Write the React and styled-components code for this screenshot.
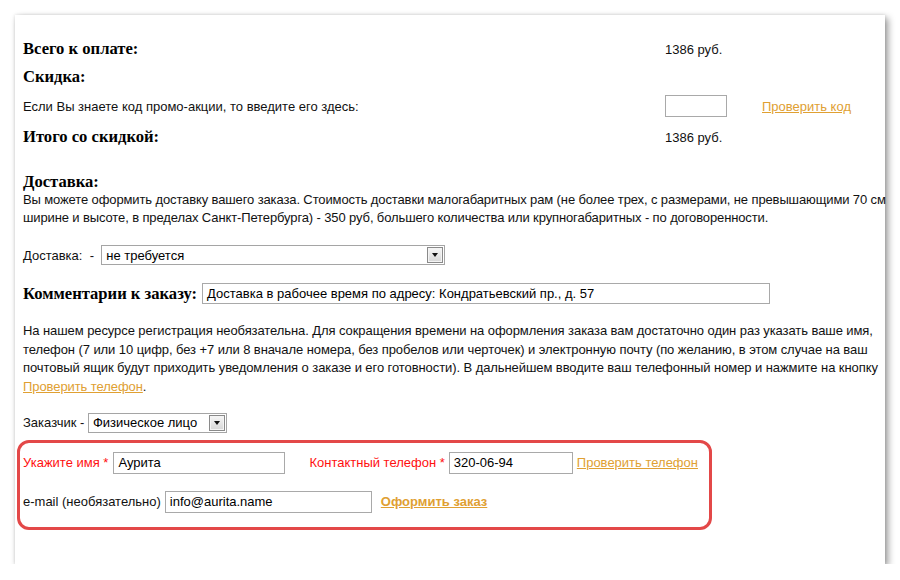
import React from 'react';
import styled, { createGlobalStyle } from 'styled-components';

const GlobalStyle = createGlobalStyle`
  html, body {
    margin: 0;
    padding: 0;
    background: #fff;
  }
  body {
    font-family: 'Liberation Sans', Arial, sans-serif;
    font-size: 13px;
    color: #111;
  }
`;

const Card = styled.div`
  margin: 15px 0 0 15px;
  width: 870px;
  box-sizing: border-box;
  padding: 24px 0 34px 8px;
  background: #fff;
  box-shadow: 3px 3px 7px rgba(0, 0, 0, 0.4), 0 0 3px rgba(0, 0, 0, 0.12);
  display: flex;
  flex-direction: column;
`;

const Row = styled.div`
  display: flex;
  align-items: center;
  height: ${(p) => p.h || 20}px;
  margin-top: ${(p) => p.mt || 0}px;
  white-space: pre;
`;

const SumRow = styled.div`
  display: grid;
  grid-template-columns: 642px 62px 35px auto;
  align-items: center;
  height: ${(p) => p.h || 20}px;
  margin-top: ${(p) => p.mt || 0}px;
`;

const Heading = styled.div`
  font-family: 'Liberation Serif', 'Times New Roman', serif;
  font-weight: bold;
  font-size: 16.6px;
  color: #000;
  height: ${(p) => p.h || 20}px;
  line-height: ${(p) => p.h || 20}px;
  margin-top: ${(p) => p.mt || 0}px;
  margin-right: ${(p) => p.mr || 0}px;
`;

const Para = styled.p`
  margin: ${(p) => p.mt || 0}px -20px 0 0;
  line-height: ${(p) => p.lh || 18}px;
  letter-spacing: ${(p) => p.ls || -0.08}px;
  white-space: nowrap;
`;

const Link = styled.a`
  color: #e0a032;
  text-decoration: underline;
  font-weight: ${(p) => (p.bold ? 'bold' : 'normal')};
  margin-left: ${(p) => p.ml || 0}px;
  cursor: pointer;
`;

const TextInput = styled.div`
  box-sizing: border-box;
  width: ${(p) => p.w}px;
  height: ${(p) => p.h || 21}px;
  border: 1px solid #a9a9a9;
  padding: 0 4px;
  display: flex;
  align-items: center;
  color: #000;
  white-space: pre;
`;

const Select = styled.div`
  box-sizing: border-box;
  width: ${(p) => p.w}px;
  height: 20px;
  border: 1px solid #a5a5a5;
  display: flex;
  align-items: center;
  justify-content: space-between;
  padding: 0 1px 0 4px;
  color: #000;
`;

const ArrowBox = styled.div`
  width: 16px;
  height: 16px;
  box-sizing: border-box;
  border: 1px solid #8a8a8a;
  box-shadow: inset 0 0 0 1px #f4f4f4;
  background: linear-gradient(#f6f6f6, #d6d6d6);
  display: flex;
  align-items: center;
  justify-content: center;
  &::after {
    content: '';
    border-left: 3.5px solid transparent;
    border-right: 3.5px solid transparent;
    border-top: 4px solid #111;
  }
`;

const RedBox = styled.div`
  margin: 7px 0 0 -6px;
  width: 695px;
  box-sizing: border-box;
  border: 3px solid #e34848;
  border-radius: 12px;
  padding: 9px 0 14px 3px;
  display: flex;
  flex-direction: column;
  gap: 17px;
`;

const Label = styled.span`
  color: ${(p) => (p.red ? '#ff1010' : '#111')};
  margin-left: ${(p) => p.ml || 0}px;
  margin-right: ${(p) => p.mr || 0}px;
`;

export default function App() {
  return (
    <>
      <GlobalStyle />
      <Card>
        <SumRow>
          <Heading>Всего к оплате:</Heading>
          <span>1386 руб.</span>
        </SumRow>
        <Heading mt={8}>Скидка:</Heading>
        <SumRow h={22} mt={8}>
          <span>Если Вы знаете код промо-акции, то введите его здесь:</span>
          <TextInput w={62} h={22} />
          <span />
          <Link>Проверить код</Link>
        </SumRow>
        <SumRow mt={10}>
          <Heading>Итого со скидкой:</Heading>
          <span>1386 руб.</span>
        </SumRow>

        <Heading mt={25} h={19}>Доставка:</Heading>
        <Para ls={-0.12}>
          Вы можете оформить доставку вашего заказа. Стоимость доставки малогабаритных рам (не более трех, с размерами, не превышающими 70 см
          <br />
          ширине и высоте, в пределах Санкт-Петербурга) - 350 руб, большего количества или крупногабаритных - по договоренности.
        </Para>

        <Row mt={18}>
          <Label>Доставка:  -  </Label>
          <Select w={344}>
            <span>не требуется</span>
            <ArrowBox />
          </Select>
        </Row>

        <Row h={21} mt={18}>
          <Heading h={21} mr={5}>Комментарии к заказу:</Heading>
          <TextInput w={568}>Доставка в рабочее время по адресу: Кондратьевский пр., д. 57</TextInput>
        </Row>

        <Para mt={18} lh={18.67}>
          На нашем ресурсе регистрация необязательна. Для сокращения времени на оформления заказа вам достаточно один раз указать ваше имя,
          <br />
          телефон (7 или 10 цифр, без +7 или 8 вначале номера, без пробелов или черточек) и электронную почту (по желанию, в этом случае на ваш
          <br />
          почтовый ящик будут приходить уведомления о заказе и его готовности). В дальнейшем вводите ваш телефонный номер и нажмите на кнопку
          <br />
          <Link>Проверить телефон</Link>.
        </Para>

        <Row mt={16}>
          <Label>Заказчик - </Label>
          <Select w={139}>
            <span>Физическое лицо</span>
            <ArrowBox />
          </Select>
        </Row>

        <RedBox>
          <Row h={22}>
            <Label red mr={5}>Укажите имя *</Label>
            <TextInput w={172} h={22}>Аурита</TextInput>
            <Label red ml={24} mr={4}>Контактный телефон *</Label>
            <TextInput w={124} h={22}>320-06-94</TextInput>
            <Link ml={4}>Проверить телефон</Link>
          </Row>
          <Row h={22}>
            <Label mr={4}>e-mail (необязательно)</Label>
            <TextInput w={207} h={22}>info@aurita.name</TextInput>
            <Link bold ml={9}>Оформить заказ</Link>
          </Row>
        </RedBox>
      </Card>
    </>
  );
}
